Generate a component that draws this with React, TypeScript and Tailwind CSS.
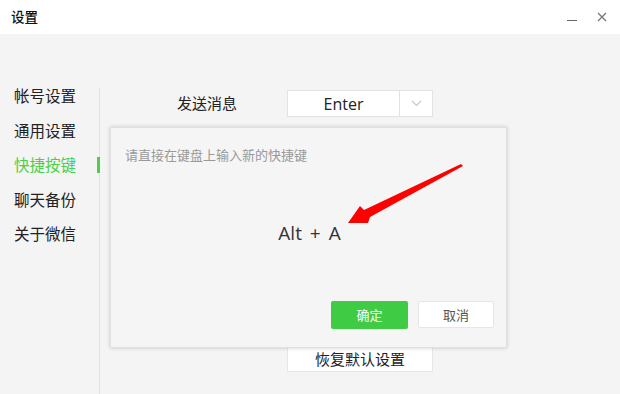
import React from "react";

const font = { fontFamily: '"Noto Sans CJK SC", "Noto Sans", sans-serif' };

export default function App() {
  const items = ["帐号设置", "通用设置", "快捷按键", "聊天备份", "关于微信"];
  return (
    <div className="relative w-[620px] h-[394px] overflow-hidden bg-[#f4f4f4] text-[#222]" style={font}>
      {/* title bar */}
      <div className="h-[34px] bg-white flex items-center justify-between pl-[11px] pr-[12px]">
        <span className="text-[13.5px] text-[#111] font-medium leading-none">设置</span>
        <div className="flex items-center gap-[20px] text-[#777]">
          <span className="block w-[10px] h-[1px] bg-[#666] mt-[6px]" />
          <svg width="10" height="10" viewBox="0 0 10 10" className="mr-[1px]">
            <path d="M1 1 L9 9 M9 1 L1 9" stroke="#777" strokeWidth="1.3" />
          </svg>
        </div>
      </div>
      {/* body */}
      <div className="flex h-[360px]">
        <div className="w-[99px] pt-[50px] flex">
          <div className="flex-1 flex flex-col pl-[14px] gap-[11.5px]">
            {items.map((t) => (
              <div key={t} className={`text-[15.5px] leading-[23px] ${t === "快捷按键" ? "text-[#4ad04c]" : "text-[#222]"}`}>{t}</div>
            ))}
          </div>
        </div>
        <div className="w-[1px] bg-[#e2e2e2] mt-[54px] relative">
          <div className="absolute left-[-2px] top-[69px] w-[3px] h-[16px] bg-[#4ad04c]" />
        </div>
        <div className="flex-1 pt-[56px] pl-[77px] flex flex-col">
          <div className="flex items-center">
            <span className="text-[15px] w-[110px]">发送消息</span>
            <div className="flex h-[27px] w-[146px] bg-white border border-[#e3e3e3]">
              <div className="flex-1 flex items-center justify-center text-[16px] text-[#222]" style={{ fontFamily: '"Open Sans", sans-serif' }}>Enter</div>
              <div className="w-[33px] border-l border-[#e3e3e3] flex items-center justify-center">
                <svg width="11" height="7" viewBox="0 0 11 7">
                  <path d="M1 1 L5.5 5.5 L10 1" fill="none" stroke="#c8c8c8" strokeWidth="1.2" />
                </svg>
              </div>
            </div>
          </div>
          <div className="mt-[229px] ml-[110px] w-[146px] h-[26px] bg-white border border-[#e6e6e6] flex items-center justify-center text-[15px] text-[#222]">
            恢复默认设置
          </div>
        </div>
      </div>
      {/* dialog */}
      <div className="absolute left-[110px] top-[127px] w-[397px] h-[221px] bg-[#f5f5f5] border border-[#e0e0e0] shadow-[0_0_4px_rgba(0,0,0,0.18)] flex flex-col">
        <div className="pl-[14px] pt-[18px] text-[13px] text-[#999] leading-[18px]">请直接在键盘上输入新的快捷键</div>
        <div className="flex justify-center mt-[57px] pl-[2px] text-[19px] text-[#333] leading-[24px] [word-spacing:3px]" style={{ fontFamily: '"Open Sans", sans-serif' }}>
          Alt + A
        </div>
        <div className="flex justify-end gap-[10px] mt-[56px] pr-[12px]">
          <div className="w-[77px] h-[28px] bg-[#3fcc44] rounded-[2px] flex items-center justify-center text-white text-[13px]">确定</div>
          <div className="w-[76px] h-[27px] bg-white border border-[#e6e6e6] rounded-[2px] flex items-center justify-center text-[#555] text-[13px]">取消</div>
        </div>
      </div>
      {/* arrow */}
      <svg className="absolute left-0 top-0 pointer-events-none" width="620" height="394">
        <polygon points="461,164 463,166 370,217 368,223 348,223 360,206 364,210" fill="#ff0000" />
      </svg>
    </div>
  );
}
